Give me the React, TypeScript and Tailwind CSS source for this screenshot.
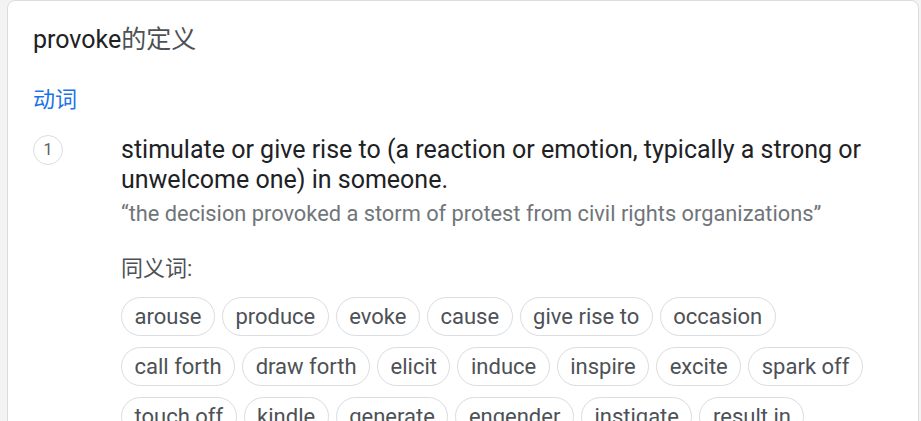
import React from "react";

const rows: string[][] = [
  ["arouse", "produce", "evoke", "cause", "give rise to", "occasion"],
  ["call forth", "draw forth", "elicit", "induce", "inspire", "excite", "spark off"],
  ["touch off", "kindle", "generate", "engender", "instigate", "result in"],
];

const font = { fontFamily: 'Roboto, "Noto Sans CJK SC", sans-serif' };

export default function App() {
  const all = rows.flat();
  return (
    <div className="w-[921px] h-[421px] overflow-hidden bg-[#f3f3f3]" style={font}>
      <div className="ml-[7px] w-[912px] h-[440px] bg-white border border-[#dadce0] rounded-lg pl-[25px] pr-[30px] pt-[23px]">
        <div className="text-[25px] leading-[32px] text-[#202124]">
          provoke<span className="text-[#4d5156]">的定义</span>
        </div>
        <div className="mt-[30px] text-[22px] leading-[28px] text-[#1a73e8]">动词</div>
        <div className="mt-[21px] flex">
          <div className="w-[30px] h-[30px] shrink-0 rounded-full border border-[#dadce0] flex items-center justify-center text-[17px] text-[#5f6368]">
            1
          </div>
          <div className="ml-[58px] flex-1">
            <div className="text-[25px] leading-[30px] text-[#202124]">
              stimulate or give rise to (a reaction or emotion, typically a strong or unwelcome one) in someone.
            </div>
            <div className="text-[21.8px] leading-[28px] text-[#70757a] mt-[5px]">
              “the decision provoked a storm of protest from civil rights organizations”
            </div>
            <div className="mt-[27px] text-[22px] leading-[28px] text-[#4d5156]">同义词:</div>
            <div className="mt-[14px] flex flex-wrap gap-x-[7px] gap-y-[11px]">
              {all.map((w) => (
                <div
                  key={w}
                  className="h-[39px] px-[12.5px] rounded-full border border-[#dadce0] flex items-center text-[22px] text-[#4d5156]"
                >
                  {w}
                </div>
              ))}
            </div>
          </div>
        </div>
      </div>
    </div>
  );
}
